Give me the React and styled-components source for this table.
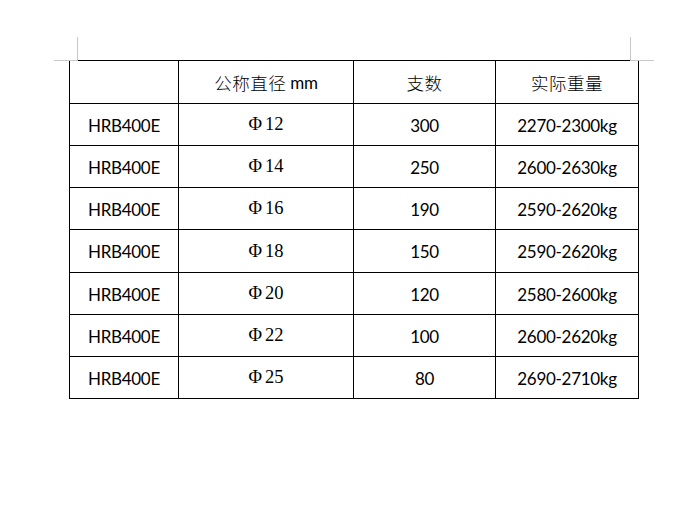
import React from "react";
import styled, { createGlobalStyle } from "styled-components";

const Global = createGlobalStyle`
  html, body { margin: 0; padding: 0; background: #ffffff; }
  body { font-family: Lato, "Noto Sans CJK SC", sans-serif; color: #000; }
`;

const Page = styled.div`
  width: 680px;
  height: 516px;
  padding-top: 37px;
  box-sizing: border-box;
  background: #ffffff;
`;

const Marks = styled.div`
  display: flex;
  justify-content: space-between;
  margin-left: 54px;
  width: 600px;
  height: 24px;
`;

const Mark = styled.div`
  width: 24px;
  height: 24px;
  box-sizing: border-box;
  border-bottom: 1px solid #c8c8c8;
  ${(p) => (p.$side === "left" ? "border-right: 1px solid #c8c8c8;" : "border-left: 1px solid #c8c8c8;")}
`;

const Grid = styled.div`
  display: grid;
  grid-template-columns: 109px 175px 142px 143px;
  grid-template-rows: 43px 42px 42px 42px 43px 42px 42px 42px;
  width: 570px;
  margin-left: 69px;
  margin-top: -1px;
  border-left: 1px solid #000;
  border-top: 1px solid #000;
  box-sizing: border-box;
`;

const Cell = styled.div`
  display: flex;
  align-items: center;
  justify-content: center;
  border-right: 1px solid #000;
  border-bottom: 1px solid #000;
  font-family: ${(p) =>
    p.$serif
      ? `"Liberation Serif", "Noto Sans CJK SC", serif`
      : `Lato, "Noto Sans CJK SC", sans-serif`};
  font-size: ${(p) => (p.$serif ? "18.5px" : "17px")};
  letter-spacing: ${(p) => (p.$serif ? "0" : "-0.3px")};
  white-space: nowrap;
  padding-top: ${(p) => (p.$serif ? "0" : "1px")};
`;

const Cjk = styled.span`
  font-family: "Noto Sans CJK SC", sans-serif;
  font-size: 17.5px;
  font-weight: 300;
  letter-spacing: 0.5px;
`;

const Phi = styled.span`
  font-family: "Liberation Serif", serif;
  margin-right: 3px;
`;

const rows = [
  ["12", "300", "2270-2300kg"],
  ["14", "250", "2600-2630kg"],
  ["16", "190", "2590-2620kg"],
  ["18", "150", "2590-2620kg"],
  ["20", "120", "2580-2600kg"],
  ["22", "100", "2600-2620kg"],
  ["25", "80", "2690-2710kg"],
];

export default function App() {
  return (
    <>
      <Global />
      <Page>
        <Marks>
          <Mark $side="left" />
          <Mark $side="right" />
        </Marks>
        <Grid>
          <Cell />
          <Cell>
            <Cjk>公称直径</Cjk>&nbsp;mm
          </Cell>
          <Cell>
            <Cjk>支数</Cjk>
          </Cell>
          <Cell>
            <Cjk>实际重量</Cjk>
          </Cell>
          {rows.map(([d, n, w], i) => (
            <React.Fragment key={i}>
              <Cell>HRB400E</Cell>
              <Cell $serif>
                <Phi>Φ</Phi>
                {d}
              </Cell>
              <Cell>{n}</Cell>
              <Cell>{w}</Cell>
            </React.Fragment>
          ))}
        </Grid>
      </Page>
    </>
  );
}
